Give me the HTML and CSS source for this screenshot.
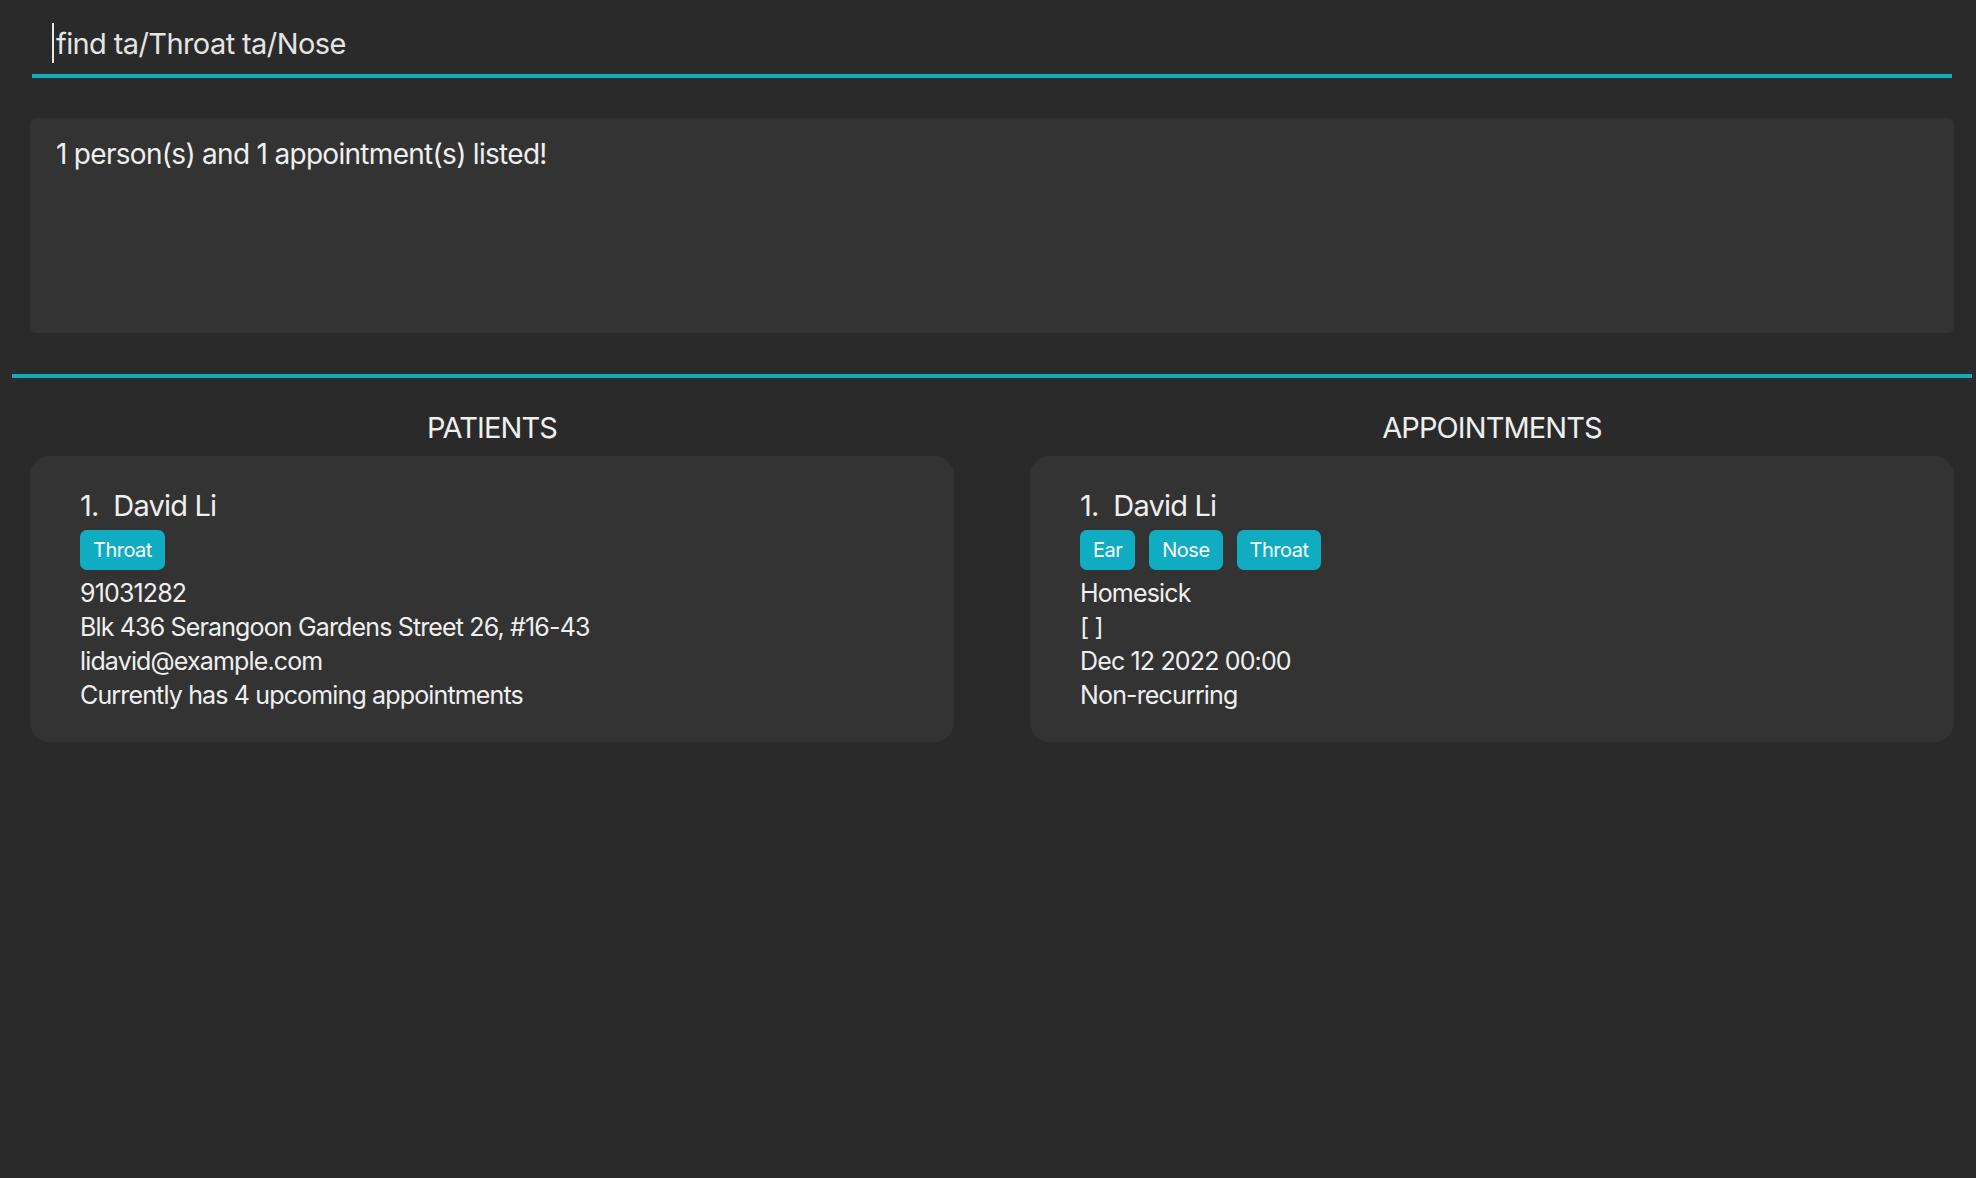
FILE: index.html
```html
<!DOCTYPE html>
<html lang="en">
<head>
<meta charset="utf-8">
<title>Clinic</title>
<link rel="stylesheet" href="styles.css">
</head>
<body>
<div class="app">
  <div class="command-box">
    <span class="caret"></span><span class="command-text">find ta/Throat ta/Nose</span>
  </div>
  <div class="result-box">1 person(s) and 1 appointment(s) listed!</div>
  <div class="separator"></div>
  <div class="panels">
    <section class="panel">
      <h2 class="panel-title">PATIENTS</h2>
      <div class="card">
        <div class="card-name">1.&nbsp;&nbsp;David Li</div>
        <div class="tags">
          <span class="tag">Throat</span>
        </div>
        <div class="card-line">91031282</div>
        <div class="card-line">Blk 436 Serangoon Gardens Street 26, #16-43</div>
        <div class="card-line">lidavid@example.com</div>
        <div class="card-line">Currently has 4 upcoming appointments</div>
      </div>
    </section>
    <section class="panel">
      <h2 class="panel-title">APPOINTMENTS</h2>
      <div class="card">
        <div class="card-name">1.&nbsp;&nbsp;David Li</div>
        <div class="tags">
          <span class="tag">Ear</span>
          <span class="tag">Nose</span>
          <span class="tag">Throat</span>
        </div>
        <div class="card-line">Homesick</div>
        <div class="card-line">[ ]</div>
        <div class="card-line">Dec 12 2022 00:00</div>
        <div class="card-line">Non-recurring</div>
      </div>
    </section>
  </div>
</div>
</body>
</html>
```

FILE: styles.css
```css
html, body {
  margin: 0;
  padding: 0;
  background: #2a2a2a;
}

body {
  font-family: Inter, "Noto Sans", "Liberation Sans", sans-serif;
  color: #efefef;
  width: 1976px;
  height: 1178px;
  overflow: hidden;
}

.app {
  display: flex;
  flex-direction: column;
}

.command-box {
  margin-left: 32px;
  width: 1920px;
  height: 78px;
  box-sizing: border-box;
  border-bottom: 4px solid #10acc2;
  display: flex;
  align-items: center;
  padding-left: 20px;
}

.caret {
  display: inline-block;
  width: 2px;
  height: 40px;
  background: #e8e8e8;
  margin-top: 12px;
}

.command-text {
  font-size: 29px;
  color: #e4e4e4;
  margin-left: 2px;
  margin-top: 12px;
  letter-spacing: -0.6px;
}

.result-box {
  margin: 40px 22px 0 30px;
  height: 215px;
  box-sizing: border-box;
  background: #333333;
  border-radius: 6px;
  padding: 18px 26px;
  font-size: 28px;
  line-height: 36px;
  color: #efefef;
  letter-spacing: -0.7px;
}

.separator {
  margin: 41px 4px 0 12px;
  height: 4px;
  background: #10acc2;
}

.panels {
  display: grid;
  grid-template-columns: 924px 924px;
  column-gap: 76px;
  padding: 0 22px 0 30px;
}

.panel {
  display: flex;
  flex-direction: column;
}

.panel-title {
  margin: 0;
  height: 78px;
  box-sizing: border-box;
  padding-top: 32px;
  font-size: 29px;
  line-height: 36px;
  font-weight: 400;
  text-align: center;
  color: #efefef;
  letter-spacing: -0.9px;
}

.card {
  background: #333333;
  border-radius: 20px;
  height: 286px;
  box-sizing: border-box;
  padding: 31px 50px 0;
}

.card-name {
  font-size: 29px;
  line-height: 38px;
  letter-spacing: -0.8px;
}

.tags {
  display: flex;
  gap: 14px;
  margin-top: 5px;
  margin-bottom: 6px;
}

.tag {
  display: inline-flex;
  align-items: center;
  height: 40px;
  padding: 0 13px;
  background: #10acc2;
  border-radius: 7px;
  font-size: 20px;
  color: #ffffff;
  letter-spacing: -0.5px;
}

.card-line {
  font-size: 25px;
  line-height: 34px;
  letter-spacing: -0.85px;
}
```
